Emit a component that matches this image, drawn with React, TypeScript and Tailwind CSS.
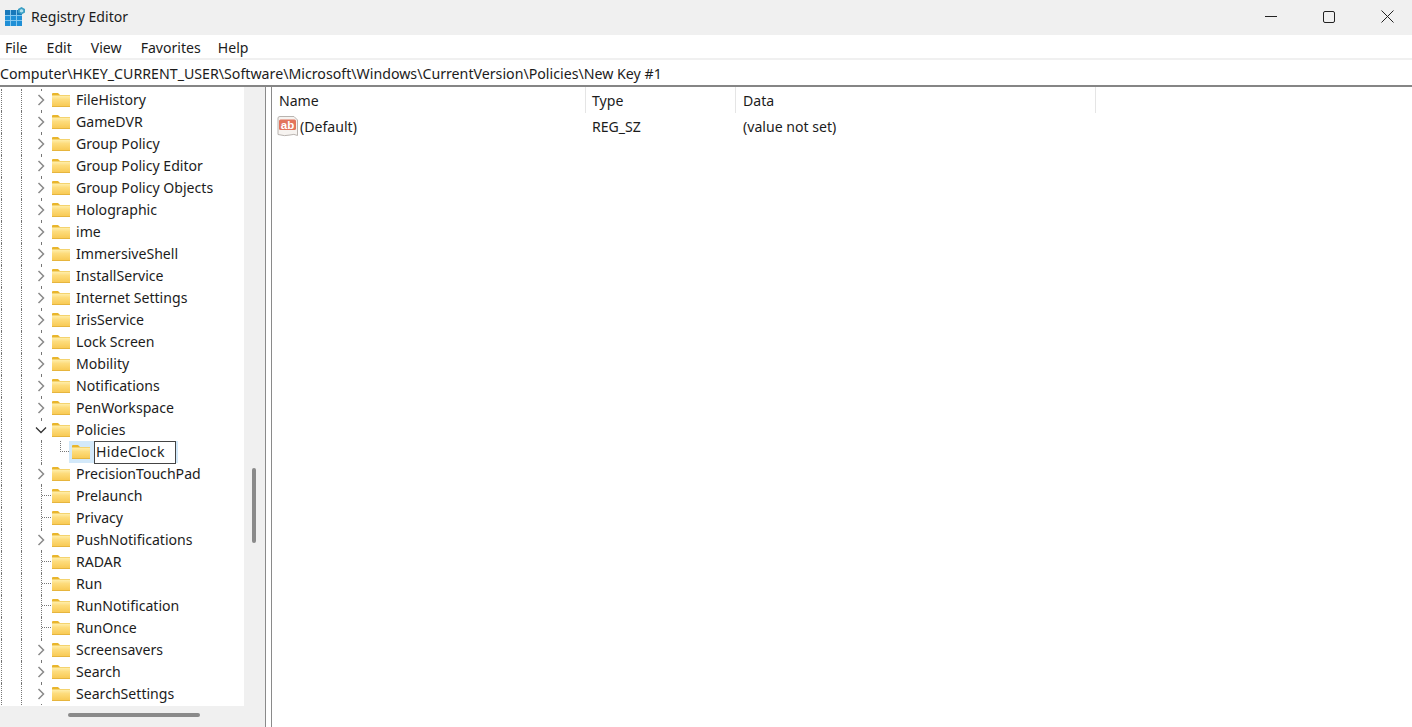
const keys: { name: string; arrow?: boolean }[] = [
  { name: "FileHistory", arrow: true },
  { name: "GameDVR", arrow: true },
  { name: "Group Policy", arrow: true },
  { name: "Group Policy Editor", arrow: true },
  { name: "Group Policy Objects", arrow: true },
  { name: "Holographic", arrow: true },
  { name: "ime", arrow: true },
  { name: "ImmersiveShell", arrow: true },
  { name: "InstallService", arrow: true },
  { name: "Internet Settings", arrow: true },
  { name: "IrisService", arrow: true },
  { name: "Lock Screen", arrow: true },
  { name: "Mobility", arrow: true },
  { name: "Notifications", arrow: true },
  { name: "PenWorkspace", arrow: true },
];

const keysAfter: { name: string; arrow?: boolean }[] = [
  { name: "PrecisionTouchPad", arrow: true },
  { name: "Prelaunch" },
  { name: "Privacy" },
  { name: "PushNotifications", arrow: true },
  { name: "RADAR" },
  { name: "Run" },
  { name: "RunNotification" },
  { name: "RunOnce" },
  { name: "Screensavers", arrow: true },
  { name: "Search", arrow: true },
  { name: "SearchSettings", arrow: true },
];

function Folder() {
  return (
    <svg width="18" height="14" viewBox="0 0 18 14" className="shrink-0">
      <defs>
        <linearGradient id="folderBody" x1="0" y1="0" x2="0" y2="1">
          <stop offset="0" stopColor="#fff0b0" />
          <stop offset="0.35" stopColor="#fddc7c" />
          <stop offset="1" stopColor="#f8c850" />
        </linearGradient>
      </defs>
      <path d="M0 1 Q0 0 1 0 H6 L8 2 H18 V3 H0 Z" fill="#e9b52c" />
      <rect x="0" y="2.5" width="18" height="11.5" fill="url(#folderBody)" />
      <rect x="0" y="13" width="18" height="1" fill="#e6b53e" />
    </svg>
  );
}

function AppIcon() {
  return (
    <svg width="20" height="19" viewBox="0 0 20 19" className="shrink-0">
      <rect x="0" y="3" width="17" height="16" fill="#1f8fd6" />
      <rect x="0" y="3" width="17" height="5" fill="#1878ba" />
      <path d="M5.5 3 V19 M11.5 3 V19 M0 8.5 H17 M0 13.5 H17" stroke="#8fcdf0" strokeWidth="0.9" />
      <path d="M16.5 0 L20 2 V5.5 L16.5 7.5 L13 5.5 V2 Z" fill="#3c9fc4" />
      <path d="M16.5 2 L18.2 2.9 V4.7 L16.5 5.5 L14.8 4.7 V2.9 Z" fill="#b0e0ee" />
    </svg>
  );
}

function StringIcon() {
  return (
    <svg width="22" height="21" viewBox="0 0 22 21" className="shrink-0">
      <path d="M1 2 Q1 0.5 3 0.5 H17 L20.5 4 V19.5 Q17 17.5 13 19 Q8 20.5 1 18.5 Z" fill="#f6f3f0" stroke="#b9b4b0" />
      <rect x="2" y="3.5" width="17" height="10.5" rx="1.5" fill="#e2745c" />
      <text x="10.5" y="12.5" textAnchor="middle" fontSize="11.5" fontWeight="700" fill="#fff" fontFamily="'Liberation Sans', sans-serif">ab</text>
    </svg>
  );
}

function Chevron({ open }: { open?: boolean }) {
  return (
    <div className="relative py-[3px] bg-white">
      <svg width="14" height="12" viewBox="0 0 14 12" className="block">
        {open ? (
          <path d="M2 3.5 L7 8.5 L12 3.5" fill="none" stroke="#333" strokeWidth="1.3" />
        ) : (
          <path d="M4.5 1 L9.5 6 L4.5 11" fill="none" stroke="#8a8a8a" strokeWidth="1.5" />
        )}
      </svg>
    </div>
  );
}

function Guides() {
  return (
    <>
      <div className="ml-[1px] w-[20px] h-full border-l border-dotted border-[#777]" />
      <div className="w-[10px] h-full border-l border-dotted border-[#777]" />
    </>
  );
}

function KeyRow({ name, arrow }: { name: string; arrow?: boolean }) {
  return (
    <div className="flex items-center h-[22px] shrink-0">
      <Guides />
      <div className="relative flex items-center justify-center w-[20px] h-full">
        <div className="absolute left-[10px] top-0 h-full border-l border-dotted border-[#777]" />
        {arrow ? (
          <Chevron />
        ) : (
          <div className="absolute left-[11px] top-[10px] w-[9px] border-t border-dotted border-[#777]" />
        )}
      </div>
      <div className="ml-px">
        <Folder />
      </div>
      <span className="ml-[6px] whitespace-nowrap">{name}</span>
    </div>
  );
}

function TreePane() {
  return (
    <div className="flex flex-col w-[266px] shrink-0 border-r border-[#8a8a8a] bg-[#f0f0f0]">
      <div className="flex flex-1 min-h-0">
        <div className="flex flex-col w-[244px] shrink-0 pt-[2px] bg-white overflow-hidden">
          {keys.map((k) => (
            <KeyRow key={k.name} name={k.name} arrow={k.arrow} />
          ))}
          <div className="flex items-center h-[22px] shrink-0">
            <Guides />
            <div className="relative flex items-center justify-center w-[20px] h-full">
              <div className="absolute left-[10px] top-0 h-full border-l border-dotted border-[#777]" />
              <Chevron open />
            </div>
            <div className="ml-px">
              <Folder />
            </div>
            <span className="ml-[6px]">Policies</span>
          </div>
          <div className="flex items-center h-[22px] shrink-0">
            <Guides />
            <div className="relative w-[20px] h-full">
              <div className="absolute left-[10px] top-0 h-full border-l border-dotted border-[#777]" />
            </div>
            <div className="relative w-[18px] h-full">
              <div className="absolute left-[9px] top-0 h-[11px] w-[9px] border-l border-b border-dotted border-[#777]" />
            </div>
            <div className="flex items-center h-full w-[109px] bg-[#d3e9fa]">
              <div className="ml-[3px]">
                <Folder />
              </div>
              <div className="flex items-center h-[23px] w-[82px] ml-[4px] pl-[1px] bg-white border border-[#444] tracking-[0.3px]">
                HideClock
              </div>
            </div>
          </div>
          {keysAfter.map((k) => (
            <KeyRow key={k.name} name={k.name} arrow={k.arrow} />
          ))}
        </div>
        <div className="relative flex-1">
          <div className="absolute left-[8px] top-[381px] w-[4px] h-[75px] rounded-full bg-[#8a8a8a]" />
        </div>
      </div>
      <div className="flex items-center h-[21px] pb-[3px] shrink-0">
        <div className="ml-[68px] w-[132px] h-[4px] rounded-full bg-[#8a8a8a]" />
      </div>
    </div>
  );
}

function ListPane() {
  return (
    <div className="flex-1 ml-[5px] border-l border-[#8a8a8a] bg-white">
      <div className="flex h-[26px]">
        <div className="w-[314px] pl-[7px] pt-[3px] border-r border-[#e5e5e5]">Name</div>
        <div className="w-[150px] pl-[6px] pt-[3px] border-r border-[#e5e5e5]">Type</div>
        <div className="w-[360px] pl-[7px] pt-[3px] border-r border-[#e5e5e5]">Data</div>
      </div>
      <div className="flex items-center h-[26px] pt-[2px]">
        <div className="flex items-center w-[314px] pl-[5px]">
          <StringIcon />
          <span className="ml-[1px]">(Default)</span>
        </div>
        <div className="w-[150px] pl-[6px]">REG_SZ</div>
        <div className="pl-[7px]">(value not set)</div>
      </div>
    </div>
  );
}

export default function App() {
  return (
    <div className="flex flex-col w-[1412px] h-[727px] overflow-hidden bg-white text-[14.1px] text-[#1c1c1c] font-['Noto_Sans',sans-serif]">
      <div className="flex items-center h-[35px] pb-[2px] shrink-0 bg-[#f0f0f0]">
        <div className="ml-[5px]">
          <AppIcon />
        </div>
        <span className="ml-[6px] flex-1">Registry Editor</span>
        <svg width="12" height="2" className="mr-[46px]">
          <rect width="12" height="1" fill="#222" />
        </svg>
        <svg width="12" height="12" className="mr-[46px]">
          <rect x="0.5" y="0.5" width="11" height="11" rx="1.5" fill="none" stroke="#222" />
        </svg>
        <svg width="13" height="13" className="mr-[18px]">
          <path d="M0.5 0.5 L12.5 12.5 M12.5 0.5 L0.5 12.5" stroke="#222" />
        </svg>
      </div>
      <div className="flex items-center gap-[18px] h-[23px] shrink-0 px-[5px] pt-[2px]">
        <span>File</span>
        <span className="ml-px">Edit</span>
        <span className="ml-px">View</span>
        <span className="ml-px">Favorites</span>
        <span className="-ml-px">Help</span>
      </div>
      <div className="flex items-center h-[29px] pt-[2px] shrink-0 border-t-2 border-b-2 border-t-[#f0f0f0] border-b-[#858585] whitespace-nowrap text-[14.2px]">
        Computer\HKEY_CURRENT_USER\Software\Microsoft\Windows\CurrentVersion\Policies\New Key #1
      </div>
      <div className="flex flex-1 min-h-0">
        <TreePane />
        <ListPane />
      </div>
    </div>
  );
}
